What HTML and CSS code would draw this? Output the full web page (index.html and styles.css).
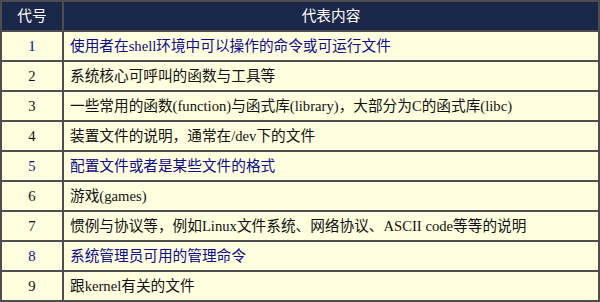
FILE: index.html
```html
<!DOCTYPE html>
<html lang="zh-CN">
<head>
<meta charset="utf-8">
<title>代号</title>
<link rel="stylesheet" href="styles.css">
</head>
<body>
<table class="codes">
  <thead>
    <tr><th class="num">代号</th><th>代表内容</th></tr>
  </thead>
  <tbody>
    <tr class="blue"><td class="num">1</td><td>使用者在shell环境中可以操作的命令或可运行文件</td></tr>
    <tr><td class="num">2</td><td>系统核心可呼叫的函数与工具等</td></tr>
    <tr><td class="num">3</td><td>一些常用的函数(function)与函式库(library)，大部分为C的函式库(libc)</td></tr>
    <tr><td class="num">4</td><td>装置文件的说明，通常在/dev下的文件</td></tr>
    <tr class="blue"><td class="num">5</td><td>配置文件或者是某些文件的格式</td></tr>
    <tr><td class="num">6</td><td>游戏(games)</td></tr>
    <tr><td class="num">7</td><td>惯例与协议等，例如Linux文件系统、网络协议、ASCII code等等的说明</td></tr>
    <tr class="blue"><td class="num">8</td><td>系统管理员可用的管理命令</td></tr>
    <tr><td class="num">9</td><td>跟kernel有关的文件</td></tr>
  </tbody>
</table>
</body>
</html>
```
FILE: styles.css
```css
html, body {
  margin: 0;
  padding: 0;
  background: #ffffff;
}
.codes {
  width: 600px;
  border-collapse: separate;
  border-spacing: 2px;
  background: #4e4e4e;
  font-family: "Liberation Serif", "Noto Sans CJK SC", serif;
  font-size: 14.67px;
  color: #111111;
  table-layout: fixed;
}
.codes th,
.codes td {
  height: 28px;
  padding: 0 6px;
  text-align: left;
  vertical-align: middle;
  background: #ffffe0;
  white-space: nowrap;
  line-height: 18px;
}
.codes th {
  background: #1b2749;
  color: #ffffff;
  font-weight: normal;
  text-align: center;
}
.codes .num {
  width: 48px;
  text-align: center;
}
.codes .blue td {
  color: #0c0c8c;
}
```
